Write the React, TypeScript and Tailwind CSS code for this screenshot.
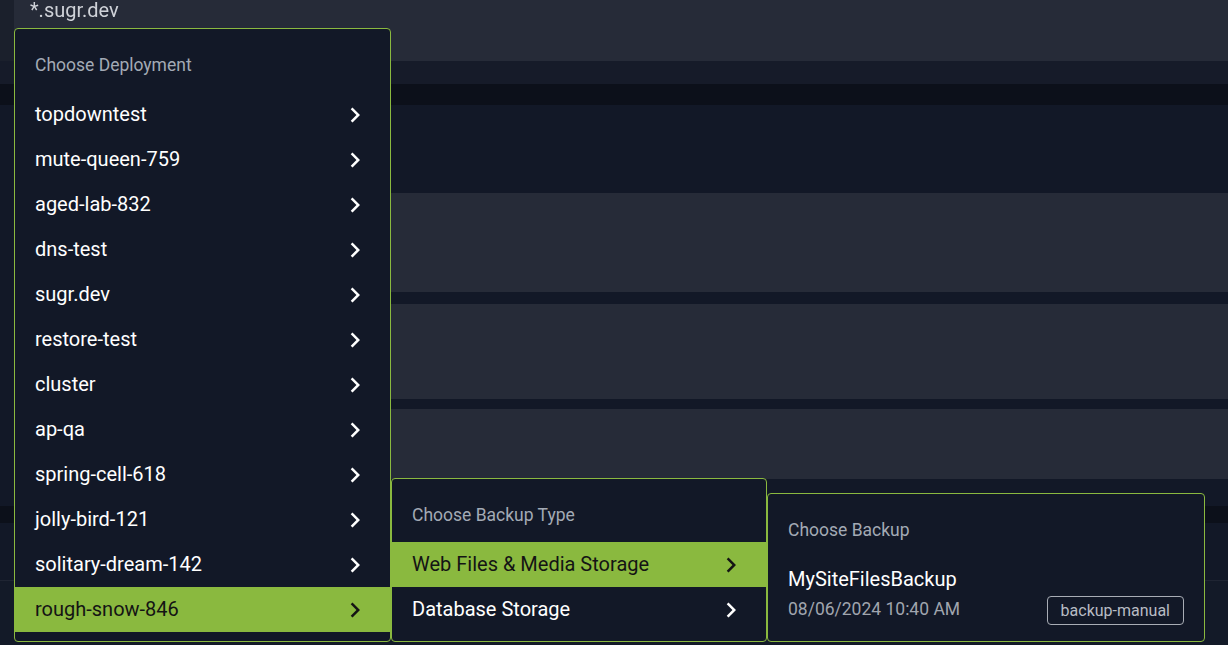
import React from "react";
import clsx from "clsx";
import { MdChevronRight } from "react-icons/md";

const deployments = [
  "topdowntest",
  "mute-queen-759",
  "aged-lab-832",
  "dns-test",
  "sugr.dev",
  "restore-test",
  "cluster",
  "ap-qa",
  "spring-cell-618",
  "jolly-bird-121",
  "solitary-dream-142",
  "rough-snow-846",
];

const backupTypes = ["Web Files & Media Storage", "Database Storage"];

type MenuRowProps = {
  label: string;
  active?: boolean;
};

const MenuRow = ({ label, active }: MenuRowProps) => (
  <div
    className={clsx(
      "flex h-[45px] cursor-pointer items-center justify-between pr-5 pl-5",
      active ? "bg-[#8ab93f] text-[#141414]" : "text-white"
    )}
  >
    <span className="-mt-px text-[20px] leading-6">{label}</span>
    <MdChevronRight size={30} />
  </div>
);

const MenuHeader = ({ children }: { children: React.ReactNode }) => (
  <div className="flex h-[55px] items-center px-5 pt-px text-[17.5px] text-[#a3aab5]">
    {children}
  </div>
);

export default function App() {
  return (
    <div className="relative h-[645px] w-[1228px] overflow-hidden bg-[#121827] font-['Roboto',sans-serif]">
      {/* blurred page underneath the menus */}
      <div className="flex flex-col">
        <div className="flex h-[61px]">
          <div className="w-[14px] bg-[#1b202c]" />
          <div className="flex-1 bg-[#262b38] pl-4">
            <span className="block text-[20px] leading-5 text-[#cfd2d8] blur-[0.6px]">
              *.sugr.dev
            </span>
          </div>
        </div>
        <div className="h-[23px] bg-[#161b29]" />
        <div className="h-[21px] bg-[#0c101a]" />
        <div className="h-[88px]" />
        <div className="ml-[14px] h-[99px] bg-[#262b38]" />
        <div className="h-[12px]" />
        <div className="ml-[14px] h-[95px] bg-[#262b38]" />
        <div className="h-[10px]" />
        <div className="ml-[14px] h-[70px] bg-[#262b38]" />
        <div className="h-[27px]" />
        <div className="h-[17px] bg-[#0c101a]" />
        <div className="h-[57px]" />
        <div className="h-px bg-[#1f2533]" />
        <div className="h-[64px] bg-[#131a28]" />
      </div>

      {/* level 1 */}
      <div className="absolute top-[28px] left-[14px] flex h-[614px] w-[377px] flex-col rounded border border-[#8ab93f] bg-[#121827] pt-2 pb-[9px]">
        <MenuHeader>Choose Deployment</MenuHeader>
        {deployments.map((d) => (
          <MenuRow key={d} label={d} active={d === "rough-snow-846"} />
        ))}
      </div>

      {/* level 2 */}
      <div className="absolute top-[478px] left-[391px] flex h-[164px] w-[376px] flex-col rounded border border-[#8ab93f] bg-[#121827] pt-2 pb-[9px]">
        <MenuHeader>Choose Backup Type</MenuHeader>
        {backupTypes.map((t, i) => (
          <MenuRow key={t} label={t} active={i === 0} />
        ))}
      </div>

      {/* level 3 */}
      <div className="absolute top-[493px] left-[767px] flex h-[149px] w-[438px] flex-col rounded border border-[#8ab93f] bg-[#121827] pt-2 pb-[9px]">
        <MenuHeader>Choose Backup</MenuHeader>
        <div className="flex flex-col px-5 pt-2">
          <span className="text-[20px] leading-[28px] text-white">
            MySiteFilesBackup
          </span>
          <div className="flex items-center justify-between">
            <span className="text-[17.5px] leading-[28px] text-[#a0a5ae]">
              08/06/2024 10:40 AM
            </span>
            <span className="mt-[3px] flex h-[29px] items-center rounded-sm border border-[#a8adb5] px-[13px] text-[16px] text-[#b8bcc4]">
              backup-manual
            </span>
          </div>
        </div>
      </div>
    </div>
  );
}
